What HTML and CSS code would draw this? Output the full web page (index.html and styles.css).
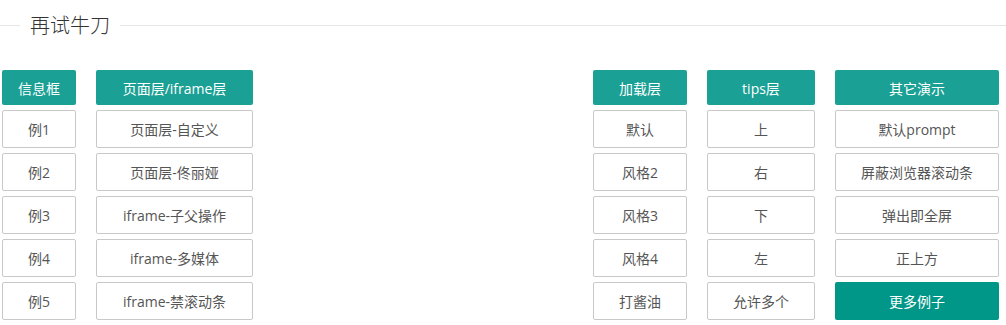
FILE: index.html
```html
<!DOCTYPE html>
<html lang="zh-CN">
<head>
<meta charset="utf-8">
<title>再试牛刀</title>
<link rel="stylesheet" href="styles.css">
</head>
<body>
<fieldset class="field-title">
  <legend>再试牛刀</legend>
</fieldset>
<div class="demo">
  <div class="group">
    <div class="col col-1">
      <div class="btn head">信息框</div>
      <div class="btn">例1</div>
      <div class="btn">例2</div>
      <div class="btn">例3</div>
      <div class="btn">例4</div>
      <div class="btn">例5</div>
    </div>
    <div class="col col-2">
      <div class="btn head">页面层/iframe层</div>
      <div class="btn">页面层-自定义</div>
      <div class="btn">页面层-佟丽娅</div>
      <div class="btn">iframe-子父操作</div>
      <div class="btn">iframe-多媒体</div>
      <div class="btn">iframe-禁滚动条</div>
    </div>
  </div>
  <div class="group">
    <div class="col col-3">
      <div class="btn head">加载层</div>
      <div class="btn">默认</div>
      <div class="btn">风格2</div>
      <div class="btn">风格3</div>
      <div class="btn">风格4</div>
      <div class="btn">打酱油</div>
    </div>
    <div class="col col-4">
      <div class="btn head">tips层</div>
      <div class="btn">上</div>
      <div class="btn">右</div>
      <div class="btn">下</div>
      <div class="btn">左</div>
      <div class="btn">允许多个</div>
    </div>
    <div class="col col-5">
      <div class="btn head">其它演示</div>
      <div class="btn">默认prompt</div>
      <div class="btn">屏蔽浏览器滚动条</div>
      <div class="btn">弹出即全屏</div>
      <div class="btn">正上方</div>
      <div class="btn primary">更多例子</div>
    </div>
  </div>
</div>
</body>
</html>
```
FILE: styles.css
```css
html, body {
  margin: 0;
  padding: 0;
  background: #fff;
}
body {
  font-family: "Open Sans", "Noto Sans CJK SC", sans-serif;
  font-size: 14px;
  color: #555;
}
.field-title {
  margin: 13px 0 0 0;
  padding: 0;
  border: none;
  border-top: 1px solid #e6e6e6;
  min-width: 0;
}
.field-title legend {
  margin-left: 20px;
  padding: 0 10px;
  font-family: "Noto Sans CJK SC", sans-serif;
  font-size: 20px;
  font-weight: 300;
  color: #333;
  line-height: 24px;
}
.demo {
  display: flex;
  justify-content: space-between;
  padding: 33px 7px 0 2px;
}
.group {
  display: flex;
  gap: 20px;
}
.col {
  display: flex;
  flex-direction: column;
  gap: 5px;
}
.col-1 { width: 74px; }
.col-2 { width: 157px; }
.col-3 { width: 94px; }
.col-4 { width: 108px; }
.col-5 { width: 164px; }
.btn {
  box-sizing: border-box;
  height: 38px;
  border: 1px solid #c9c9c9;
  border-radius: 2px;
  background: #fff;
  color: #555;
  display: flex;
  align-items: center;
  justify-content: center;
  white-space: nowrap;
}
.btn.head {
  height: 35px;
  border: none;
  background: #1aa094;
  color: #fff;
}
.btn.primary {
  border: none;
  background: #009688;
  color: #fff;
}
```
